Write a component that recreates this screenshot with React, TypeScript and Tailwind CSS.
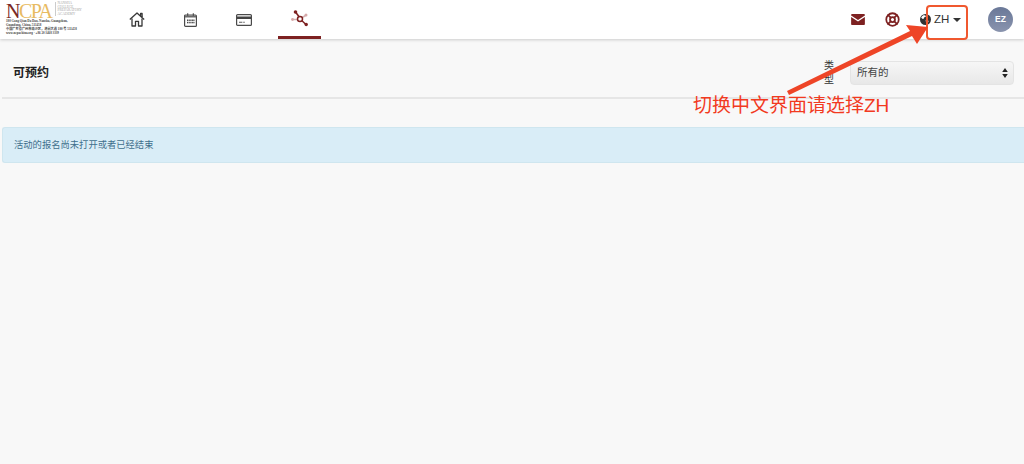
import React from "react";
import { LifeBuoy } from "lucide-react";

const cjk = '"Liberation Sans", "Noto Sans CJK SC", sans-serif';

function Logo() {
  return (
    <div className="w-[100px] h-[39px] pl-[6px] pt-[1px]" style={{ fontFamily: '"Liberation Serif", "Noto Sans CJK SC", serif' }}>
      <div className="flex items-start h-[18px]">
        <div className="text-[20px] leading-[20px] tracking-[-1.500px] whitespace-nowrap">
          <span className="text-[#7a2a26]">N</span>
          <span className="text-[#e8bb62]">CPA</span>
        </div>
        <div className="ml-[3px] mt-[1px] pl-[2px] border-l border-[#cccccc] text-[3.500px] leading-[3.500px] text-[#a5a5a5] whitespace-nowrap">
          <div>NANSHA</div>
          <div>COLLEGE</div>
          <div>PREPARATORY</div>
          <div>ACADEMY</div>
        </div>
      </div>
      <div className="text-[3.200px] leading-[4px] font-bold text-[#444444] whitespace-nowrap">
        <div>180 Gang Qian Da Dao, Nansha, Guangzhou,</div>
        <div>Guandong, China, 511458</div>
        <div>中国广东省广州市南沙区，港前大道 180 号 511458</div>
        <div>www.ncpachina.org · +86 20 3468 3339</div>
      </div>
    </div>
  );
}

function HomeIcon() {
  return (
    <svg width="16" height="15" viewBox="0 0 16 15" fill="none" stroke="#383838" strokeWidth="1.300" strokeLinejoin="round">
      <path d="M.8 7.500 8 1l7.200 6.500M11.600 3.700V1.500h1.500v4.200" />
      <path d="M3 6.500V14h3.500V9.300h3V14H13V6.500" />
    </svg>
  );
}

function CalendarIcon() {
  return (
    <svg width="13" height="14" viewBox="0 0 13 14">
      <rect x=".6" y="2" width="11.800" height="11.400" rx="1" fill="#ffffff" stroke="#4a4a4a" strokeWidth="1.200" />
      <rect x="1" y="2.500" width="11" height="2" fill="#6a6a6a" />
      <rect x="3" y=".3" width="1.300" height="2.600" fill="#555555" />
      <rect x="8.700" y=".3" width="1.300" height="2.600" fill="#555555" />
      <g fill="#4a4a4a">
        <rect x="3" y="6.500" width="1.500" height="1.500" /><rect x="5.200" y="6.500" width="1.500" height="1.500" /><rect x="7.400" y="6.500" width="1.500" height="1.500" /><rect x="9.300" y="6.500" width="1.200" height="1.500" />
        <rect x="3" y="8.800" width="1.500" height="1.500" /><rect x="5.200" y="8.800" width="1.500" height="1.500" /><rect x="7.400" y="8.800" width="1.500" height="1.500" /><rect x="9.300" y="8.800" width="1.200" height="1.500" />
      </g>
    </svg>
  );
}

function CardIcon() {
  return (
    <svg width="16" height="12" viewBox="0 0 16 12">
      <rect x=".6" y=".6" width="14.800" height="10.800" rx="1" fill="#ffffff" stroke="#4a4a4a" strokeWidth="1.200" />
      <rect x="1" y="2.500" width="14" height="2.500" fill="#444444" />
      <rect x="3" y="7.700" width="3" height="1.200" fill="#777777" />
      <rect x="6.500" y="7.700" width="2.500" height="1.200" fill="#999999" />
    </svg>
  );
}

function NetworkIcon() {
  return (
    <svg width="18" height="17" viewBox="0 0 18 17" fill="none">
      <g stroke="#7d2121" strokeWidth="1.500">
        <line x1="4.500" y1="2" x2="9" y2="8" />
        <line x1="9" y1="9" x2="15" y2="14.500" />
        <line x1="9" y1="9" x2="14.500" y2="5.500" opacity="0.35" />
        <line x1="1.500" y1="9.500" x2="7" y2="9.500" opacity="0.35" />
        <circle cx="9" cy="9" r="2.500" fill="#ffffff" />
      </g>
      <circle cx="4.500" cy="2" r="1.800" fill="#7d2121" />
      <circle cx="15.200" cy="14.500" r="1.700" fill="#7d2121" />
      <circle cx="15" cy="5" r="1.500" fill="#d6a9a9" />
      <circle cx="1.500" cy="9.500" r="1.400" fill="#d6a9a9" />
    </svg>
  );
}

function MailSolid() {
  return (
    <svg width="14" height="11" viewBox="0 0 15 12">
      <path d="M1.200 0h12.600c.7 0 1.200.5 1.200 1.200v.5L7.500 6.600 0 1.700v-.5C0 .5.5 0 1.200 0Z" fill="#7d2121" />
      <path d="M0 3.300l7.500 4.900L15 3.300v7.500c0 .7-.5 1.200-1.200 1.200H1.200C.5 12 0 11.500 0 10.800Z" fill="#7d2121" />
    </svg>
  );
}

function Globe() {
  return (
    <svg width="11" height="11" viewBox="0 0 11 11">
      <circle cx="5.500" cy="5.500" r="5.500" fill="#333333" />
      <path d="M3 1.500c1.200-.5 2.500 0 3 .8-.5.8-1.500.6-2 1.400-.5.7-.2 1.300-1 1.300S1.500 4 1.200 3.600C1.500 2.800 2.200 2 3 1.500ZM6.500 6c1 0 2 .5 2 1.300 0 1-1 1.800-2 2-.6-.8-.4-1.600-.8-2.200C5.400 6.500 5.900 6 6.500 6Z" fill="#ffffff" />
    </svg>
  );
}

export default function App() {
  return (
    <div className="relative w-[1024px] h-[464px] overflow-hidden bg-[#f8f8f8] text-[#333333]" style={{ fontFamily: cjk }}>
      <header className="h-[39px] bg-white shadow-[0_1px_3px_rgba(0,0,0,0.18)] flex items-stretch relative">
        <Logo />
        <nav className="ml-[15px] flex items-stretch">
          <div className="w-[43px] flex items-center justify-center"><HomeIcon /></div>
          <div className="ml-[11px] w-[43px] flex items-center justify-center"><CalendarIcon /></div>
          <div className="ml-[10px] w-[43px] flex items-center justify-center"><CardIcon /></div>
          <div className="ml-[13px] w-[43px] flex items-center justify-center border-b-[3px] border-[#7d2121]"><NetworkIcon /></div>
        </nav>
        <div className="ml-auto flex items-center">
          <MailSolid />
          <LifeBuoy size={15} strokeWidth={2.800} className="ml-[20px] text-[#7d2121]" />
          <div className="ml-[20px] flex items-center w-[55px]">
            <Globe />
            <span className="ml-[3px] text-[11.500px] text-[#333333]">ZH</span>
            <span className="ml-[4px] w-0 h-0 border-x-[4px] border-x-transparent border-t-[4px] border-t-[#333333]" />
          </div>
          <div className="ml-[13px] mr-[11px] w-[25px] h-[25px] rounded-full bg-gradient-to-b from-[#6a7898] to-[#8a94ae] text-white text-[8.500px] font-bold flex items-center justify-center">EZ</div>
        </div>
      </header>

      <main className="pl-[2px]">
        <div className="h-[60px] pt-[9px] border-b-2 border-[#e6e6e6] flex items-center pl-[11px]">
          <h1 className="text-[12px] font-bold text-[#222222]">可预约</h1>
          <div className="ml-auto flex items-center pr-[10px]">
            <label className="w-[12px] text-[10px] leading-[14px] text-[#333333] mr-[14px]">类型</label>
            <div className="w-[164px] h-[24px] rounded-[4px] border border-[#e4e4e4] bg-gradient-to-b from-[#f6f6f6] to-[#e8e8e8] flex items-center justify-between pl-[6px] pr-[5px] text-[10.500px] text-[#444444]">
              <span>所有的</span>
              <svg width="6" height="10" viewBox="0 0 6 10"><path d="M3 0l2.800 4H.2ZM3 10 .2 6h5.600Z" fill="#222222" /></svg>
            </div>
          </div>
        </div>
        <div className="mt-[28px] h-[36px] pt-[2px] bg-[#d9edf7] border-y border-l border-[#cfe6ef] rounded-l-[3px] flex items-center pl-[11px] text-[9.300px] text-[#3f6f8c]">
          活动的报名尚未打开或者已经结束
        </div>
      </main>

      {/* annotation */}
      <div className="absolute left-[926px] top-[5px] w-[42px] h-[35px] border-2 border-[#f0582f] rounded-[4px]" />
      <svg className="absolute left-0 top-0" width="1024" height="464" viewBox="0 0 1024 464">
        <polygon points="787,91 789,95 912,36 917,44 928,27 906,25 910,31" fill="#ee4527" />
      </svg>
      <div className="absolute left-[693px] top-[95px] text-[19px] leading-[22px] text-[#f23a1f] whitespace-nowrap">切换中文界面请选择ZH</div>
    </div>
  );
}
